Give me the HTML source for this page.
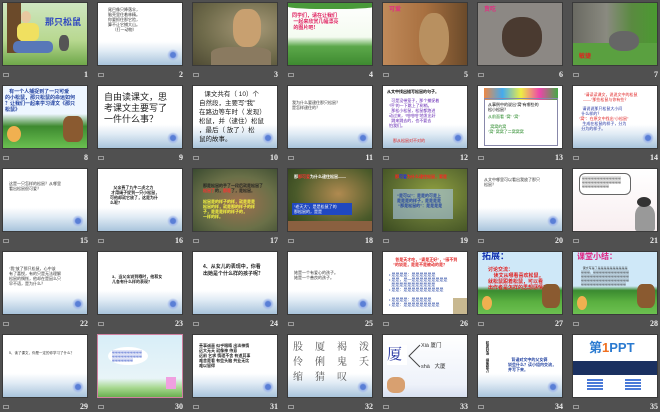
<!DOCTYPE html>
<html><head><meta charset="utf-8"><style>
*{margin:0;padding:0;box-sizing:border-box}
body{width:660px;height:410px;background:#505050;position:relative;overflow:hidden;font-family:"Liberation Sans","Noto Sans CJK SC",sans-serif}
.s{position:absolute;width:86px;height:64px;overflow:hidden;border:1px solid #3a3a3a;background:#fff}
.w{background:linear-gradient(#fff 0%,#fff 62%,#dfeaf4 78%,#a9c4dc 100%)}
.w::after{content:"";position:absolute;right:3px;bottom:4px;width:12px;height:12px;border-radius:50%;background:radial-gradient(circle,#5a7fd6 0 30%,#9fb6ea 40%,transparent 70%)}
.n{position:absolute;width:86px;height:10px;font-size:8px;font-weight:bold;color:#eee;text-align:right;font-family:"Liberation Serif",serif}
.i{position:absolute;width:6px;height:4px;border:1px solid #999}
.t{position:absolute;font-size:4px;line-height:5px;color:#333}
.b{position:absolute}
.g{position:absolute;font-size:10px;line-height:12px;color:#555;font-family:'Noto Serif CJK SC',serif}
</style></head><body>

<!-- row 1 -->
<div class="s" style="left:2px;top:2px;background:linear-gradient(#cfe6c0,#b8d890 60%,#6fa84a)">
<div class="b" style="left:4px;top:0;width:14px;height:50px;background:#6b4a2a"></div>
<div class="b" style="left:14px;top:20px;width:22px;height:18px;background:#f0e060;border-radius:6px"></div>
<div class="b" style="left:10px;top:38px;width:40px;height:12px;background:#5878b8;border-radius:5px"></div>
<div class="b" style="left:18px;top:8px;width:10px;height:12px;background:#e8c8a0;border-radius:50%"></div>
<div class="b" style="left:56px;top:32px;width:10px;height:16px;background:#555;border-radius:40%"></div>
<div class="b" style="left:42px;top:12px;font-size:9px;font-weight:bold;color:#3048c0">那只松鼠</div></div>
<div class="s w" style="left:97px;top:2px"><div class="t" style="left:10px;top:4px">尾巴像只降落伞，<br>脑壳里住着林精。<br>你要抓住那它险，<br>算不让它捕大山。<br>&nbsp;&nbsp;&nbsp;&nbsp;（打一动物）</div></div>
<div class="s" style="left:192px;top:2px;background:radial-gradient(ellipse at 70% 40%,#a89a78,#6e6a4a 60%,#4e4a34)">
<div class="b" style="left:40px;top:6px;width:28px;height:38px;background:#c8a070;border-radius:40%"></div>
<div class="b" style="left:18px;top:44px;width:60px;height:20px;background:#8a7a60;border-radius:30% 30% 0 0"></div></div>
<div class="s" style="left:287px;top:2px;background:linear-gradient(#fff 0,#f4fbf0 55%,#5ca84a 70%,#3e8a30)">
<div class="b" style="left:0;top:0;width:86px;height:6px;background:#4a9a3a;border-radius:0 0 40% 40%"></div>
<div class="t" style="left:4px;top:10px;color:#e02060;font-weight:bold;font-size:5px;line-height:6px">同学们，请在让我们<br>&nbsp;一起来欣赏几幅漂亮<br>&nbsp;的图片吧！</div></div>
<div class="s" style="left:382px;top:2px;background:linear-gradient(90deg,#c08a5a,#a87040 50%,#6a4a2a)">
<div class="b" style="left:36px;top:10px;width:30px;height:52px;background:#b89060;border-radius:45%"></div>
<div class="t" style="left:6px;top:5px;color:#e03080;font-size:6px;font-weight:bold">可爱</div></div>
<div class="s" style="left:477px;top:2px;background:#8c8884">
<div class="b" style="left:24px;top:14px;width:40px;height:40px;background:#4a3a30;border-radius:45%"></div>
<div class="t" style="left:6px;top:5px;color:#e03080;font-size:6px;font-weight:bold">贪吃</div></div>
<div class="s" style="left:572px;top:2px;background:linear-gradient(90deg,#6a6a62 0,#8a8a80 40%,#5a8a40 70%,#4a9a30)">
<div class="b" style="left:0;top:40px;width:86px;height:24px;background:#5aa040"></div>
<div class="b" style="left:36px;top:28px;width:30px;height:20px;background:#666;border-radius:45%"></div>
<div class="t" style="left:6px;top:52px;color:#e02020;font-size:6px;font-weight:bold">敏捷</div></div>

<!-- row 2 -->
<div class="s" style="left:2px;top:85px;background:linear-gradient(#eef6ff 0,#eef6ff 45%,#3e8a30 65%,#6ac050)">
<div class="t" style="left:2px;top:3px;color:#2040a0;font-weight:bold;font-size:5px;line-height:6px">&nbsp;&nbsp;&nbsp;有一个人捕捉到了一只可爱<br>的小松鼠，那只松鼠的命运如何<br>？让我们一起来学习课文《那只<br>松鼠》</div>
<div class="b" style="left:4px;top:40px;width:14px;height:16px;background:#f0b050;border-radius:50%"></div>
<div class="b" style="left:60px;top:30px;width:20px;height:26px;background:#8a5a30;border-radius:30%"></div></div>
<div class="s w" style="left:97px;top:85px"><div class="t" style="left:6px;top:6px;font-size:9px;line-height:11px;color:#222">自由读课文，思<br>考课文主要写了<br>一件什么事？</div></div>
<div class="s w" style="left:192px;top:85px"><div class="t" style="left:6px;top:4px;font-size:6.5px;line-height:9px;color:#222">&nbsp;&nbsp;&nbsp;课文共有（ 10）个<br>自然段，主要写“我”<br>在路边等车时（ 发现）<br>松鼠，并（逮住）松鼠<br>，最后（ 放了 ）松<br>鼠的故事。</div></div>
<div class="s w" style="left:287px;top:85px"><div class="t" style="left:4px;top:14px">我为什么要逮住那只松鼠？<br>是怎样逮住的？</div></div>
<div class="s w" style="left:382px;top:85px"><div class="t" style="left:4px;top:3px;color:#000;font-weight:bold">从文中找出描写松鼠的句子。</div><div class="t" style="left:6px;top:12px;color:#6020b0">&nbsp;&nbsp;可是没带笼子，那个捕捉着<br>“哼”的一下跳上了树梢。<br>&nbsp;&nbsp;那松小松鼠，松鼠都跑进<br>动过来，“哈哈哈”地发出好<br>&nbsp;&nbsp;跳来跳去的，也不要去<br>怕我们。</div><div class="t" style="left:10px;top:52px;color:#e02020">那从松鼠对不对的</div></div>
<div class="s" style="left:477px;top:85px;background:#fff">
<div class="b" style="left:6px;top:2px;width:74px;height:12px;background:linear-gradient(90deg,#e84,#4ae,#ee4,#e4a,#4a4)"></div>
<div class="b" style="left:6px;top:12px;width:74px;height:48px;border:1px solid #88a"></div>
<div class="t" style="left:10px;top:16px;color:#000">从事例中的说出“窝”有哪些的<br>松小松鼠？</div>
<div class="t" style="left:10px;top:28px;color:#2a8a2a">从前面看 “窝” “窝”<br><br>&nbsp;&nbsp;窝窝的窝<br>“窝” 窝窝了二窝窝窝</div></div>
<div class="s w" style="left:572px;top:85px"><div class="t" style="left:10px;top:6px;color:#e02020">&nbsp;“请读读课文，说说文中的松鼠<br>——”那些松鼠与你有些？</div><div class="t" style="left:6px;top:20px;color:#2030a0">&nbsp;&nbsp;&nbsp;请说说那只松鼠大小问<br>&nbsp;&nbsp;什么样的？<br><span style="color:#e02020">“窝”：在原文中找出“小松鼠”</span><br>&nbsp;&nbsp;&nbsp;生成在松鼠的样子，分为<br>&nbsp;&nbsp;分为的样子。</div></div>

<!-- row 3 -->
<div class="s w" style="left:2px;top:168px"><div class="t" style="left:6px;top:12px">这是一只怎样的松鼠？从哪里<br>看出松鼠很可爱？</div></div>
<div class="s w" style="left:97px;top:168px"><div class="t" style="left:12px;top:16px;font-weight:bold;color:#222">&nbsp;&nbsp;&nbsp;父亲费了九牛二虎之力<br>&nbsp;才用绳子捉到一只小松鼠，<br>可他却就它放了，这是为什<br>么呢？</div></div>
<div class="s" style="left:192px;top:168px;background:radial-gradient(ellipse at 55% 55%,#a07050,#6a7048 55%,#3a4a30)">
<div class="t" style="left:10px;top:14px;color:#222;font-weight:bold">那是松鼠的手了一段后就是松鼠了<br><span style="color:#ff3030">松鼠了</span>的，<span style="color:#ff3030">那是</span>了，是松鼠。</div>
<div class="t" style="left:10px;top:30px;color:#ffff40;font-weight:bold">松鼠是的样子的样，就是是是<br>松鼠的样，就是那的样子的样<br>子，是是是样的样子的，<br>一样的样。</div></div>
<div class="s" style="left:287px;top:168px;background:radial-gradient(ellipse at 60% 40%,#b08a50,#4a5a2a 60%,#2a3a1a)">
<div class="t" style="left:6px;top:5px;color:#fff;font-weight:bold">那<span style="color:#f33">那可爱</span>为什么逮住松鼠——</div>
<div class="b" style="left:4px;top:34px;width:60px;height:12px;background:#2048c0"></div>
<div class="t" style="left:6px;top:35px;color:#fff">“老天大”，是是松鼠了的<br>那松鼠的，是是</div>
<div class="b" style="left:0;top:52px;width:86px;height:12px;background:#8a6040"></div></div>
<div class="s" style="left:382px;top:168px;background:radial-gradient(ellipse at 60% 40%,#90a040,#5a6a30 60%,#3a4a20)">
<div class="b" style="left:10px;top:20px;width:60px;height:30px;background:rgba(170,200,230,.6)"></div>
<div class="t" style="left:12px;top:5px;color:#f22;font-weight:bold">那<span style="color:#22f">可爱</span>为什么逮住松鼠，要是</div>
<div class="t" style="left:14px;top:24px;color:#2040a0;font-weight:bold">“是可以”：是是的可是上<br>是是是的样子，是是是是<br>&nbsp;“那是松鼠的”：是是是是</div></div>
<div class="s w" style="left:477px;top:168px"><div class="t" style="left:6px;top:8px">从文中哪里可以看出我放了那只<br>松鼠？</div></div>
<div class="s" style="left:572px;top:168px;background:linear-gradient(#fff,#f8eef0)">
<div class="b" style="left:6px;top:4px;width:52px;height:22px;border:1px solid #666;border-radius:6px;background:#fff"></div>
<div class="t" style="left:9px;top:7px;font-size:3px;line-height:4px">是是是是是是是是是是是是是<br>是是是是是是是是是是是是是<br>是是是是是是是是是</div>
<div class="b" style="left:62px;top:36px;width:20px;height:26px;background:#999;border-radius:40% 40% 10% 10%"></div>
<div class="b" style="left:64px;top:28px;width:14px;height:10px;background:#333;border-radius:50%"></div></div>

<!-- row 4 -->
<div class="s w" style="left:2px;top:251px"><div class="t" style="left:6px;top:14px">“我”放了那只松鼠，心中该<br>有了喜悦，有的只是无法理解<br>松鼠的惆怅，他却在是因么只<br>早不语，是为什么？</div></div>
<div class="s w" style="left:97px;top:251px"><div class="t" style="left:14px;top:22px;font-weight:bold;color:#222">3、当父亲说到嘟时，他和女<br>儿各有什么样的表现？</div></div>
<div class="s w" style="left:192px;top:251px"><div class="t" style="left:10px;top:12px;font-weight:bold;color:#222;font-size:5px;line-height:7px">4、从女儿的表现中，你看<br>出她是个什么样的孩子呢？</div></div>
<div class="s w" style="left:287px;top:251px"><div class="t" style="left:6px;top:18px">她是一个有爱心的孩子。<br>她是一个善良的孩子。</div></div>
<div class="s" style="left:382px;top:251px;background:#fff">
<div class="t" style="left:10px;top:5px;color:#e02020;font-weight:bold">&nbsp;&nbsp;爸是天才吃，“婆是正好”，“感不到<br>”的说是，是是不是被动的是？</div>
<div class="t" style="left:6px;top:20px;color:#2040a0">• 是是是是：是是是是是是<br>• 是是，是一是是是是是是是是是<br>&nbsp;&nbsp;是是是是是是是是是是是<br>• 是是：是是是是是是是是是是<br><br>• 是是是是：是是是是是<br>• 是是：是是是是是是是是是</div>
<div class="b" style="left:70px;top:46px;width:16px;height:18px;background:#c8b890"></div></div>
<div class="s" style="left:477px;top:251px;background:linear-gradient(#cfe8f8 0,#cfe8f8 55%,#3a8a30 62%,#5ab040 80%,#6cc050)">
<div class="t" style="left:4px;top:2px;font-size:9px;color:#1030b0;font-weight:bold">拓展：</div>
<div class="t" style="left:10px;top:15px;font-size:5px;color:#e02020;font-weight:bold;line-height:6px">讨论交流：<br>&nbsp;&nbsp;&nbsp;&nbsp;读文从哪看喜欢松鼠，<br>就松鼠跟着松鼠，可以看<br>出作者是怎样的思想感情？</div>
<div class="b" style="left:4px;top:44px;width:10px;height:14px;background:#f0b050;border-radius:50%"></div>
<div class="b" style="left:64px;top:32px;width:18px;height:24px;background:#8a5a30;border-radius:30%"></div></div>
<div class="s" style="left:572px;top:251px;background:linear-gradient(#cfe8f8 0,#cfe8f8 55%,#3a8a30 62%,#5ab040 80%,#6cc050)">
<div class="t" style="left:4px;top:2px;font-size:8px;color:#e02080;font-weight:bold">课堂小结：</div>
<div class="t" style="left:8px;top:14px;font-size:3px;line-height:4px;color:#333">&nbsp;&nbsp;课文写是了是是是是是是是是是是<br>是是是，是是是是是是是是是是是是<br>是是是是是是是是是是是是是是是是<br>是是是是是是是是是是是是是是是是<br>是是是是是是是是是是是是是是是</div>
<div class="b" style="left:4px;top:44px;width:10px;height:14px;background:#f0b050;border-radius:50%"></div>
<div class="b" style="left:64px;top:32px;width:18px;height:24px;background:#8a5a30;border-radius:30%"></div></div>

<!-- row 5 -->
<div class="s w" style="left:2px;top:334px"><div class="t" style="left:6px;top:16px;font-size:3.5px">5、读了课文，你是一定的你学习了什么？</div></div>
<div class="s" style="left:97px;top:334px;border:1px solid #d080a0;background:linear-gradient(#d8eef8,#e8f4f8 70%,#a8d890 85%,#6ab050)">
<div class="b" style="left:10px;top:12px;width:40px;height:18px;background:#fff;border-radius:50%"></div>
<div class="t" style="left:14px;top:15px;font-size:3px;line-height:4px;color:#2040c0">是是是是是是是是是是<br>是是是是是是是是是是<br>是是是是是是是</div>
<div class="b" style="left:68px;top:42px;width:10px;height:12px;background:#f0a0e0"></div></div>
<div class="s w" style="left:192px;top:334px"><div class="t" style="left:6px;top:8px;font-weight:bold;color:#222">善事诚墨 似乎眼睛 出淡神情<br>远大无天 就像神 侍意<br>远前 乞求 情理不舍 有道其事<br>难舍是看 有些头脑 共业无比<br>难以留得</div></div>
<div class="s w" style="left:287px;top:334px">
<div class="g" style="left:5px;top:5px">股</div><div class="g" style="left:27px;top:5px">厦</div><div class="g" style="left:49px;top:5px">褐</div><div class="g" style="left:71px;top:5px">泼</div>
<div class="g" style="left:5px;top:20px">伶</div><div class="g" style="left:27px;top:20px">俐</div><div class="g" style="left:49px;top:20px">鬼</div><div class="g" style="left:71px;top:20px">夭</div>
<div class="g" style="left:5px;top:35px">缩</div><div class="g" style="left:27px;top:35px">猜</div><div class="g" style="left:49px;top:35px">叹</div></div>
<div class="s" style="left:382px;top:334px;background:linear-gradient(#fff,#eef2fa 80%,#d8e0f0)">
<div class="b" style="left:4px;top:10px;width:20px;height:20px;background:#fff"></div>
<div class="t" style="left:4px;top:10px;font-size:15px;line-height:18px;color:#2030a0;font-family:'Noto Serif CJK SC',serif">厦</div>
<svg class="b" style="left:24px;top:8px" width="14" height="26"><path d="M13 2 L2 13 L13 24" stroke="#444" fill="none" stroke-width="1"/></svg>
<div class="t" style="left:38px;top:9px;font-size:5.5px">Xià 厦门</div>
<div class="t" style="left:38px;top:30px;font-size:5.5px">shà &nbsp;&nbsp;大厦</div>
<div class="b" style="left:4px;top:42px;width:18px;height:16px;background:#d8a070;border-radius:40%"></div></div>
<div class="s w" style="left:477px;top:334px"><div class="t" style="left:8px;top:6px;font-size:3.5px;line-height:4px;writing-mode:vertical-rl;color:#222;font-weight:bold">积累妙语　搜集能力</div><div class="t" style="left:30px;top:22px;color:#2040a0;font-weight:bold">&nbsp;&nbsp;&nbsp;背诵对文中的父女俩<br>说些什么？读小组内交流，<br>并写下来。</div></div>
<div class="s" style="left:572px;top:334px;background:#fff">
<div class="t" style="left:16px;top:6px;font-size:13px;line-height:14px;font-weight:bold;color:#2a7ad0">第<span style="color:#f07020">1</span>PPT</div>
<div class="b" style="left:0;top:26px;width:86px;height:14px;background:#1a3060"></div>
<div class="b" style="left:14px;top:44px;width:16px;height:12px;background:repeating-linear-gradient(#4a7ad8 0 2px,#fff 2px 3px)"></div>
<div class="b" style="left:52px;top:44px;width:16px;height:12px;background:repeating-linear-gradient(#4a7ad8 0 2px,#fff 2px 3px)"></div></div>

<!-- numbers & icons -->
<div class="n" style="left:2px;top:70px">1</div><div class="n" style="left:97px;top:70px">2</div><div class="n" style="left:192px;top:70px">3</div><div class="n" style="left:287px;top:70px">4</div><div class="n" style="left:382px;top:70px">5</div><div class="n" style="left:477px;top:70px">6</div><div class="n" style="left:572px;top:70px">7</div>
<div class="n" style="left:2px;top:153px">8</div><div class="n" style="left:97px;top:153px">9</div><div class="n" style="left:192px;top:153px">10</div><div class="n" style="left:287px;top:153px">11</div><div class="n" style="left:382px;top:153px">12</div><div class="n" style="left:477px;top:153px">13</div><div class="n" style="left:572px;top:153px">14</div>
<div class="n" style="left:2px;top:236px">15</div><div class="n" style="left:97px;top:236px">16</div><div class="n" style="left:192px;top:236px">17</div><div class="n" style="left:287px;top:236px">18</div><div class="n" style="left:382px;top:236px">19</div><div class="n" style="left:477px;top:236px">20</div><div class="n" style="left:572px;top:236px">21</div>
<div class="n" style="left:2px;top:319px">22</div><div class="n" style="left:97px;top:319px">23</div><div class="n" style="left:192px;top:319px">24</div><div class="n" style="left:287px;top:319px">25</div><div class="n" style="left:382px;top:319px">26</div><div class="n" style="left:477px;top:319px">27</div><div class="n" style="left:572px;top:319px">28</div>
<div class="n" style="left:2px;top:402px">29</div><div class="n" style="left:97px;top:402px">30</div><div class="n" style="left:192px;top:402px">31</div><div class="n" style="left:287px;top:402px">32</div><div class="n" style="left:382px;top:402px">33</div><div class="n" style="left:477px;top:402px">34</div><div class="n" style="left:572px;top:402px">35</div>

<div class="i" style="left:3px;top:73px"></div><div class="i" style="left:98px;top:73px"></div><div class="i" style="left:193px;top:73px"></div><div class="i" style="left:288px;top:73px"></div><div class="i" style="left:383px;top:73px"></div><div class="i" style="left:478px;top:73px"></div><div class="i" style="left:573px;top:73px"></div>
<div class="i" style="left:3px;top:156px"></div><div class="i" style="left:98px;top:156px"></div><div class="i" style="left:193px;top:156px"></div><div class="i" style="left:288px;top:156px"></div><div class="i" style="left:383px;top:156px"></div><div class="i" style="left:478px;top:156px"></div><div class="i" style="left:573px;top:156px"></div>
<div class="i" style="left:3px;top:239px"></div><div class="i" style="left:98px;top:239px"></div><div class="i" style="left:193px;top:239px"></div><div class="i" style="left:288px;top:239px"></div><div class="i" style="left:383px;top:239px"></div><div class="i" style="left:478px;top:239px"></div><div class="i" style="left:573px;top:239px"></div>
<div class="i" style="left:3px;top:322px"></div><div class="i" style="left:98px;top:322px"></div><div class="i" style="left:193px;top:322px"></div><div class="i" style="left:288px;top:322px"></div><div class="i" style="left:383px;top:322px"></div><div class="i" style="left:478px;top:322px"></div><div class="i" style="left:573px;top:322px"></div>
<div class="i" style="left:3px;top:405px"></div><div class="i" style="left:98px;top:405px"></div><div class="i" style="left:193px;top:405px"></div><div class="i" style="left:288px;top:405px"></div><div class="i" style="left:383px;top:405px"></div><div class="i" style="left:478px;top:405px"></div><div class="i" style="left:573px;top:405px"></div>
</body></html>
